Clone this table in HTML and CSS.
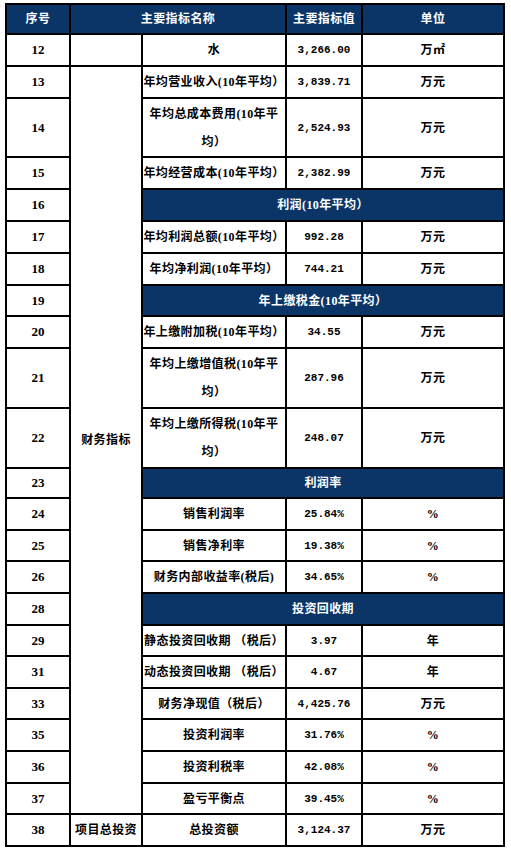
FILE: index.html
```html
<!DOCTYPE html>
<html lang="zh-CN">
<head>
<meta charset="utf-8">
<title>主要指标</title>
<link rel="stylesheet" href="styles.css">
</head>
<body>
<table class="grid">
  <colgroup>
    <col class="c1"><col class="c2"><col class="c3"><col class="c4"><col class="c5">
  </colgroup>
  <tr class="h30">
    <th>序号</th>
    <th colspan="2">主要指标名称</th>
    <th>主要指标值</th>
    <th>单位</th>
  </tr>
  <tr class="h32">
    <td class="no">12</td>
    <td></td>
    <td>水</td>
    <td class="val">3,266.00</td>
    <td>万㎡</td>
  </tr>
  <tr class="h32">
    <td class="no">13</td>
    <td rowspan="21">财务指标</td>
    <td>年均营业收入(10年平均）</td>
    <td class="val">3,839.71</td>
    <td>万元</td>
  </tr>
  <tr class="h59">
    <td class="no">14</td>
    <td class="wrap">年均总成本费用(10年平<br>均）</td>
    <td class="val">2,524.93</td>
    <td>万元</td>
  </tr>
  <tr class="h32">
    <td class="no">15</td>
    <td>年均经营成本(10年平均）</td>
    <td class="val">2,382.99</td>
    <td>万元</td>
  </tr>
  <tr class="h32">
    <td class="no">16</td>
    <td class="sec" colspan="3">利润(10年平均）</td>
  </tr>
  <tr class="h32">
    <td class="no">17</td>
    <td>年均利润总额(10年平均）</td>
    <td class="val">992.28</td>
    <td>万元</td>
  </tr>
  <tr class="h32">
    <td class="no">18</td>
    <td>年均净利润(10年平均）</td>
    <td class="val">744.21</td>
    <td>万元</td>
  </tr>
  <tr class="h31">
    <td class="no">19</td>
    <td class="sec" colspan="3">年上缴税金(10年平均）</td>
  </tr>
  <tr class="h32">
    <td class="no">20</td>
    <td>年上缴附加税(10年平均）</td>
    <td class="val">34.55</td>
    <td>万元</td>
  </tr>
  <tr class="h60">
    <td class="no">21</td>
    <td class="wrap">年均上缴增值税(10年平<br>均）</td>
    <td class="val">287.96</td>
    <td>万元</td>
  </tr>
  <tr class="h60">
    <td class="no">22</td>
    <td class="wrap">年均上缴所得税(10年平<br>均）</td>
    <td class="val">248.07</td>
    <td>万元</td>
  </tr>
  <tr class="h30">
    <td class="no">23</td>
    <td class="sec" colspan="3">利润率</td>
  </tr>
  <tr class="h32">
    <td class="no">24</td>
    <td>销售利润率</td>
    <td class="val">25.84%</td>
    <td>%</td>
  </tr>
  <tr class="h31">
    <td class="no">25</td>
    <td>销售净利率</td>
    <td class="val">19.38%</td>
    <td>%</td>
  </tr>
  <tr class="h32">
    <td class="no">26</td>
    <td>财务内部收益率(税后)</td>
    <td class="val">34.65%</td>
    <td>%</td>
  </tr>
  <tr class="h32">
    <td class="no">28</td>
    <td class="sec" colspan="3">投资回收期</td>
  </tr>
  <tr class="h31">
    <td class="no">29</td>
    <td>静态投资回收期 （税后）</td>
    <td class="val">3.97</td>
    <td>年</td>
  </tr>
  <tr class="h32">
    <td class="no">31</td>
    <td>动态投资回收期 （税后）</td>
    <td class="val">4.67</td>
    <td>年</td>
  </tr>
  <tr class="h31">
    <td class="no">33</td>
    <td>财务净现值（税后）</td>
    <td class="val">4,425.76</td>
    <td>万元</td>
  </tr>
  <tr class="h32">
    <td class="no">35</td>
    <td>投资利润率</td>
    <td class="val">31.76%</td>
    <td>%</td>
  </tr>
  <tr class="h32">
    <td class="no">36</td>
    <td>投资利税率</td>
    <td class="val">42.08%</td>
    <td>%</td>
  </tr>
  <tr class="h31">
    <td class="no">37</td>
    <td>盈亏平衡点</td>
    <td class="val">39.45%</td>
    <td>%</td>
  </tr>
  <tr class="h32">
    <td class="no">38</td>
    <td>项目总投资</td>
    <td>总投资额</td>
    <td class="val">3,124.37</td>
    <td>万元</td>
  </tr>
</table>
</body>
</html>
```

FILE: styles.css
```css
html, body {
  margin: 0;
  padding: 0;
  background: #ffffff;
}

.grid {
  margin: 3px 0 0 5px;
  width: 500px;
  table-layout: fixed;
  border-collapse: collapse;
  font-family: "Liberation Serif", "Noto Sans CJK SC", serif;
  font-size: 12px;
  font-weight: 700;
  letter-spacing: 0.4px;
  color: #000000;
}

.c1 { width: 64px; }
.c2 { width: 72px; }
.c3 { width: 144px; }
.c4 { width: 76px; }
.c5 { width: 142px; }

.grid th,
.grid td {
  border: 2px solid #000000;
  padding: 0;
  text-align: center;
  vertical-align: middle;
  white-space: nowrap;
  line-height: 14px;
}

.grid th {
  background: #0b3567;
  color: #ffffff;
  font-weight: 700;
}

.h30 { height: 30px; }
.h31 { height: 31px; }
.h32 { height: 32px; }
.h59 { height: 59px; }
.h60 { height: 60px; }

.grid td.no {
  font-size: 13px;
  letter-spacing: 0;
}

.grid td.val {
  font-family: "Liberation Mono", monospace;
  font-size: 11px;
  letter-spacing: 0;
}

.grid td.wrap {
  line-height: 28px;
}

.grid td.sec {
  background: #0b3567;
  color: #ffffff;
}
```
